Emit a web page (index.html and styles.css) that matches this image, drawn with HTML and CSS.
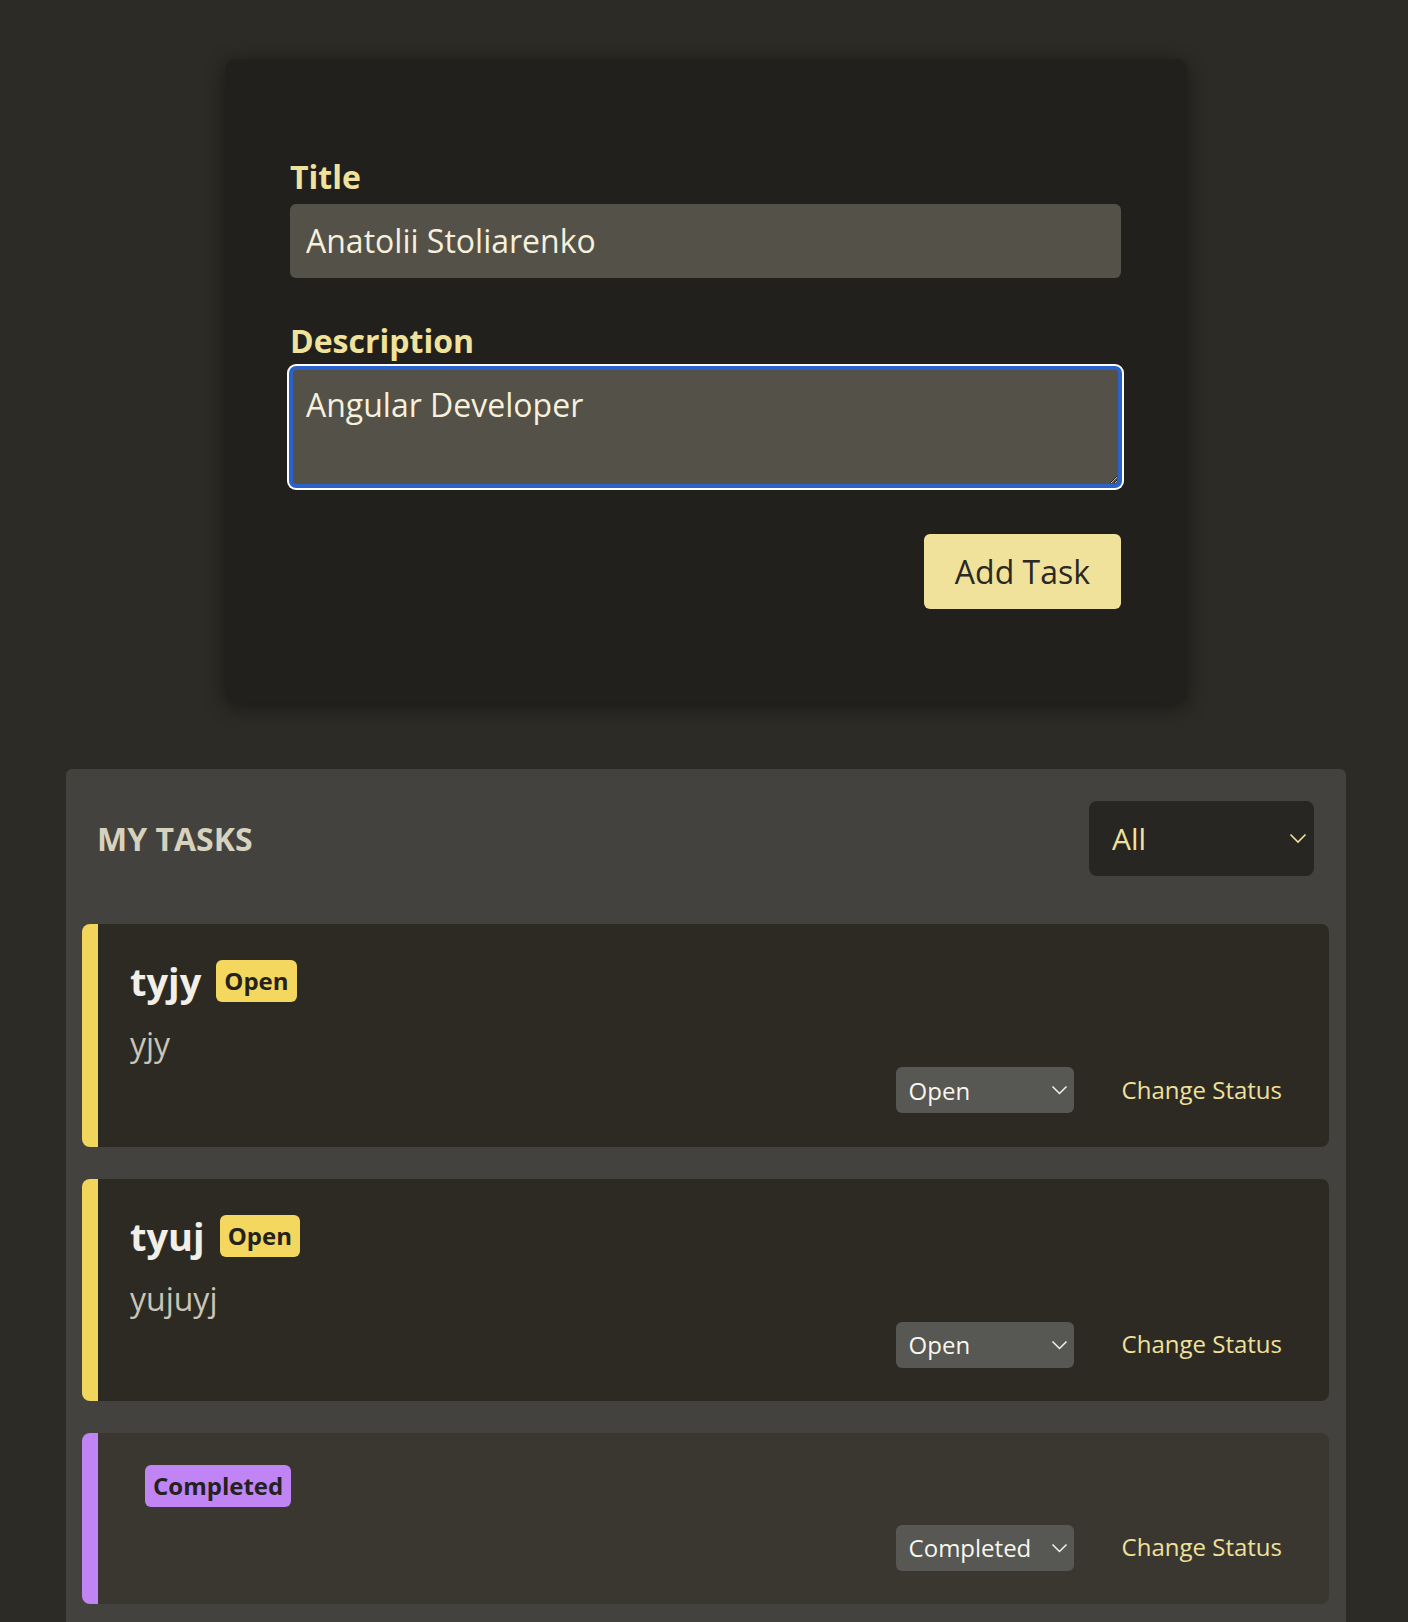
FILE: index.html
```html
<!DOCTYPE html>
<html lang="en">
<head>
<meta charset="utf-8">
<title>Tasks</title>
<link rel="stylesheet" href="styles.css">
</head>
<body>
<main class="page">
  <section class="form-card">
    <form class="task-form">
      <div class="field">
        <label class="field-label" for="title">Title</label>
        <input class="field-input" id="title" type="text" value="Anatolii Stoliarenko">
      </div>
      <div class="field">
        <label class="field-label" for="description">Description</label>
        <textarea class="field-input field-textarea is-focused" id="description">Angular Developer</textarea>
      </div>
      <div class="form-actions">
        <button class="btn-add" type="button">Add Task</button>
      </div>
    </form>
  </section>

  <section class="tasks">
    <header class="tasks-header">
      <h2 class="tasks-heading">MY TASKS</h2>
      <div class="select-wrap select-wrap--filter">
        <select class="select select--filter">
          <option>All</option>
          <option>Open</option>
          <option>Completed</option>
        </select>
        <svg class="chevron" width="18" height="11" viewBox="0 0 18 11"><polyline points="1.5,1.5 9,9 16.5,1.5" fill="none" stroke="currentColor" stroke-width="1.6"/></svg>
      </div>
    </header>

    <ul class="task-list">
      <li class="task task--open">
        <div class="task-head">
          <h3 class="task-title">tyjy</h3>
          <span class="badge badge--open">Open</span>
        </div>
        <p class="task-desc">yjy</p>
        <div class="task-actions">
          <div class="select-wrap select-wrap--status">
            <select class="select select--status">
              <option selected>Open</option>
              <option>Completed</option>
            </select>
            <svg class="chevron" width="17" height="10" viewBox="0 0 17 10"><polyline points="1.5,1.5 8.5,8.5 15.5,1.5" fill="none" stroke="currentColor" stroke-width="1.5"/></svg>
          </div>
          <button class="btn-link" type="button">Change Status</button>
        </div>
      </li>

      <li class="task task--open">
        <div class="task-head">
          <h3 class="task-title">tyuj</h3>
          <span class="badge badge--open">Open</span>
        </div>
        <p class="task-desc">yujuyj</p>
        <div class="task-actions">
          <div class="select-wrap select-wrap--status">
            <select class="select select--status">
              <option selected>Open</option>
              <option>Completed</option>
            </select>
            <svg class="chevron" width="17" height="10" viewBox="0 0 17 10"><polyline points="1.5,1.5 8.5,8.5 15.5,1.5" fill="none" stroke="currentColor" stroke-width="1.5"/></svg>
          </div>
          <button class="btn-link" type="button">Change Status</button>
        </div>
      </li>

      <li class="task task--completed">
        <div class="task-head">
          <h3 class="task-title"></h3>
          <span class="badge badge--completed">Completed</span>
        </div>
        <p class="task-desc"></p>
        <div class="task-actions">
          <div class="select-wrap select-wrap--status">
            <select class="select select--status">
              <option>Open</option>
              <option selected>Completed</option>
            </select>
            <svg class="chevron" width="17" height="10" viewBox="0 0 17 10"><polyline points="1.5,1.5 8.5,8.5 15.5,1.5" fill="none" stroke="currentColor" stroke-width="1.5"/></svg>
          </div>
          <button class="btn-link" type="button">Change Status</button>
        </div>
      </li>
    </ul>
  </section>
</main>
</body>
</html>
```

FILE: styles.css
```css
* {
  box-sizing: border-box;
}

html, body {
  margin: 0;
  padding: 0;
}

body {
  background: #2d2b26;
  font-family: "Open Sans", "Noto Sans", sans-serif;
  color: #f4efdf;
}

.page {
  padding: 59px 0 40px 4px;
}

/* ---------- form card ---------- */
.form-card {
  width: 962px;
  margin: 0 auto;
  background: #21201d;
  border-radius: 10px;
  box-shadow: 0 4px 20px rgba(0, 0, 0, 0.45);
  padding: 96px 66px 94px 65px;
}

.task-form {
  display: flex;
  flex-direction: column;
}

.field {
  display: flex;
  flex-direction: column;
  margin-bottom: 41px;
}

.field:nth-child(2) {
  margin-bottom: 0;
}

.field-label {
  font-size: 32px;
  font-weight: 700;
  color: #f0e29a;
  line-height: 1.362;
  margin-bottom: 5px;
}

.field-input {
  font-family: inherit;
  font-size: 32px;
  line-height: 1.362;
  color: #f6f0dc;
  background: #545248;
  border: 0;
  border-radius: 6px;
  padding: 15px 16px;
  height: 74px;
  outline: none;
}

.field-textarea {
  height: 120px;
  padding: 13px 13px;
  resize: vertical;
}

.field-textarea.is-focused {
  border: 3px solid #2a62cc;
  box-shadow: 0 0 0 1px #2a62cc, 0 0 0 3px #ffffff;
}

.form-actions {
  display: flex;
  justify-content: flex-end;
  margin-top: 47px;
}

.btn-add {
  font-family: inherit;
  font-size: 32px;
  line-height: 1.362;
  color: #2a2925;
  background: #f0e29a;
  border: 0;
  border-radius: 6px;
  height: 75px;
  padding: 0 31px;
  cursor: pointer;
}

/* ---------- tasks section ---------- */
.tasks {
  width: 1280px;
  margin: 66px auto 0;
  background: #43423e;
  border-radius: 6px;
  padding: 16px 17px 24px 16px;
}

.tasks-header {
  display: flex;
  align-items: center;
  justify-content: space-between;
  padding: 16px 15px 16px 15px;
  margin-bottom: 32px;
}

.tasks-heading {
  margin: 0;
  font-size: 32px;
  font-weight: 700;
  color: #d6d2bd;
  line-height: 1.362;
}

.select-wrap {
  position: relative;
  display: inline-flex;
}

.select {
  appearance: none;
  -webkit-appearance: none;
  font-family: inherit;
  border: 0;
  outline: none;
  margin: 0;
}

.select--filter {
  width: 225px;
  height: 75px;
  background: #272622;
  color: #f0e29a;
  font-size: 30px;
  border-radius: 8px;
  padding: 0 40px 0 23px;
}

.select--status {
  width: 178px;
  height: 46px;
  background: #575753;
  color: #f8f6f0;
  font-size: 24px;
  border-radius: 6px;
  padding: 0 30px 0 13px;
}

.chevron {
  position: absolute;
  top: 50%;
  pointer-events: none;
}

.select-wrap--filter .chevron {
  right: 7px;
  margin-top: -6px;
  color: #f0e29a;
}

.select-wrap--status .chevron {
  right: 6px;
  margin-top: -5px;
  color: #f4f2ec;
}

.task-list {
  list-style: none;
  margin: 0;
  padding: 0;
  display: flex;
  flex-direction: column;
  gap: 32px;
}

.task {
  background: #2d2a24;
  border-left: 16px solid #f2d65c;
  border-radius: 8px;
  padding: 32px 32px 32px 32px;
  display: flex;
  flex-direction: column;
}

.task--completed {
  background: #3a3731;
  border-left-color: #c084f5;
}

.task-head {
  display: flex;
  align-items: center;
  gap: 15px;
  margin-bottom: 16px;
}

.task-title {
  margin: 0;
  font-size: 38px;
  font-weight: 700;
  color: #f2efe8;
  line-height: 50px;
}

.badge {
  display: inline-block;
  font-size: 24px;
  font-weight: 700;
  line-height: 42px;
  height: 42px;
  padding: 0 8px;
  border-radius: 6px;
  color: #24221e;
}

.badge--open {
  background: #f3d75e;
}

.badge--completed {
  background: #c084f5;
}

.task-desc {
  margin: 0;
  font-size: 32px;
  line-height: 1.362;
  color: #c9c5b7;
}

.task-actions {
  display: flex;
  align-items: center;
  justify-content: flex-end;
  gap: 32px;
  height: 49px;
}

.btn-link {
  font-family: inherit;
  font-size: 24px;
  line-height: 1.362;
  color: #efe09a;
  background: transparent;
  border: 0;
  padding: 8px 15px 8px 16px;
  cursor: pointer;
}
```
